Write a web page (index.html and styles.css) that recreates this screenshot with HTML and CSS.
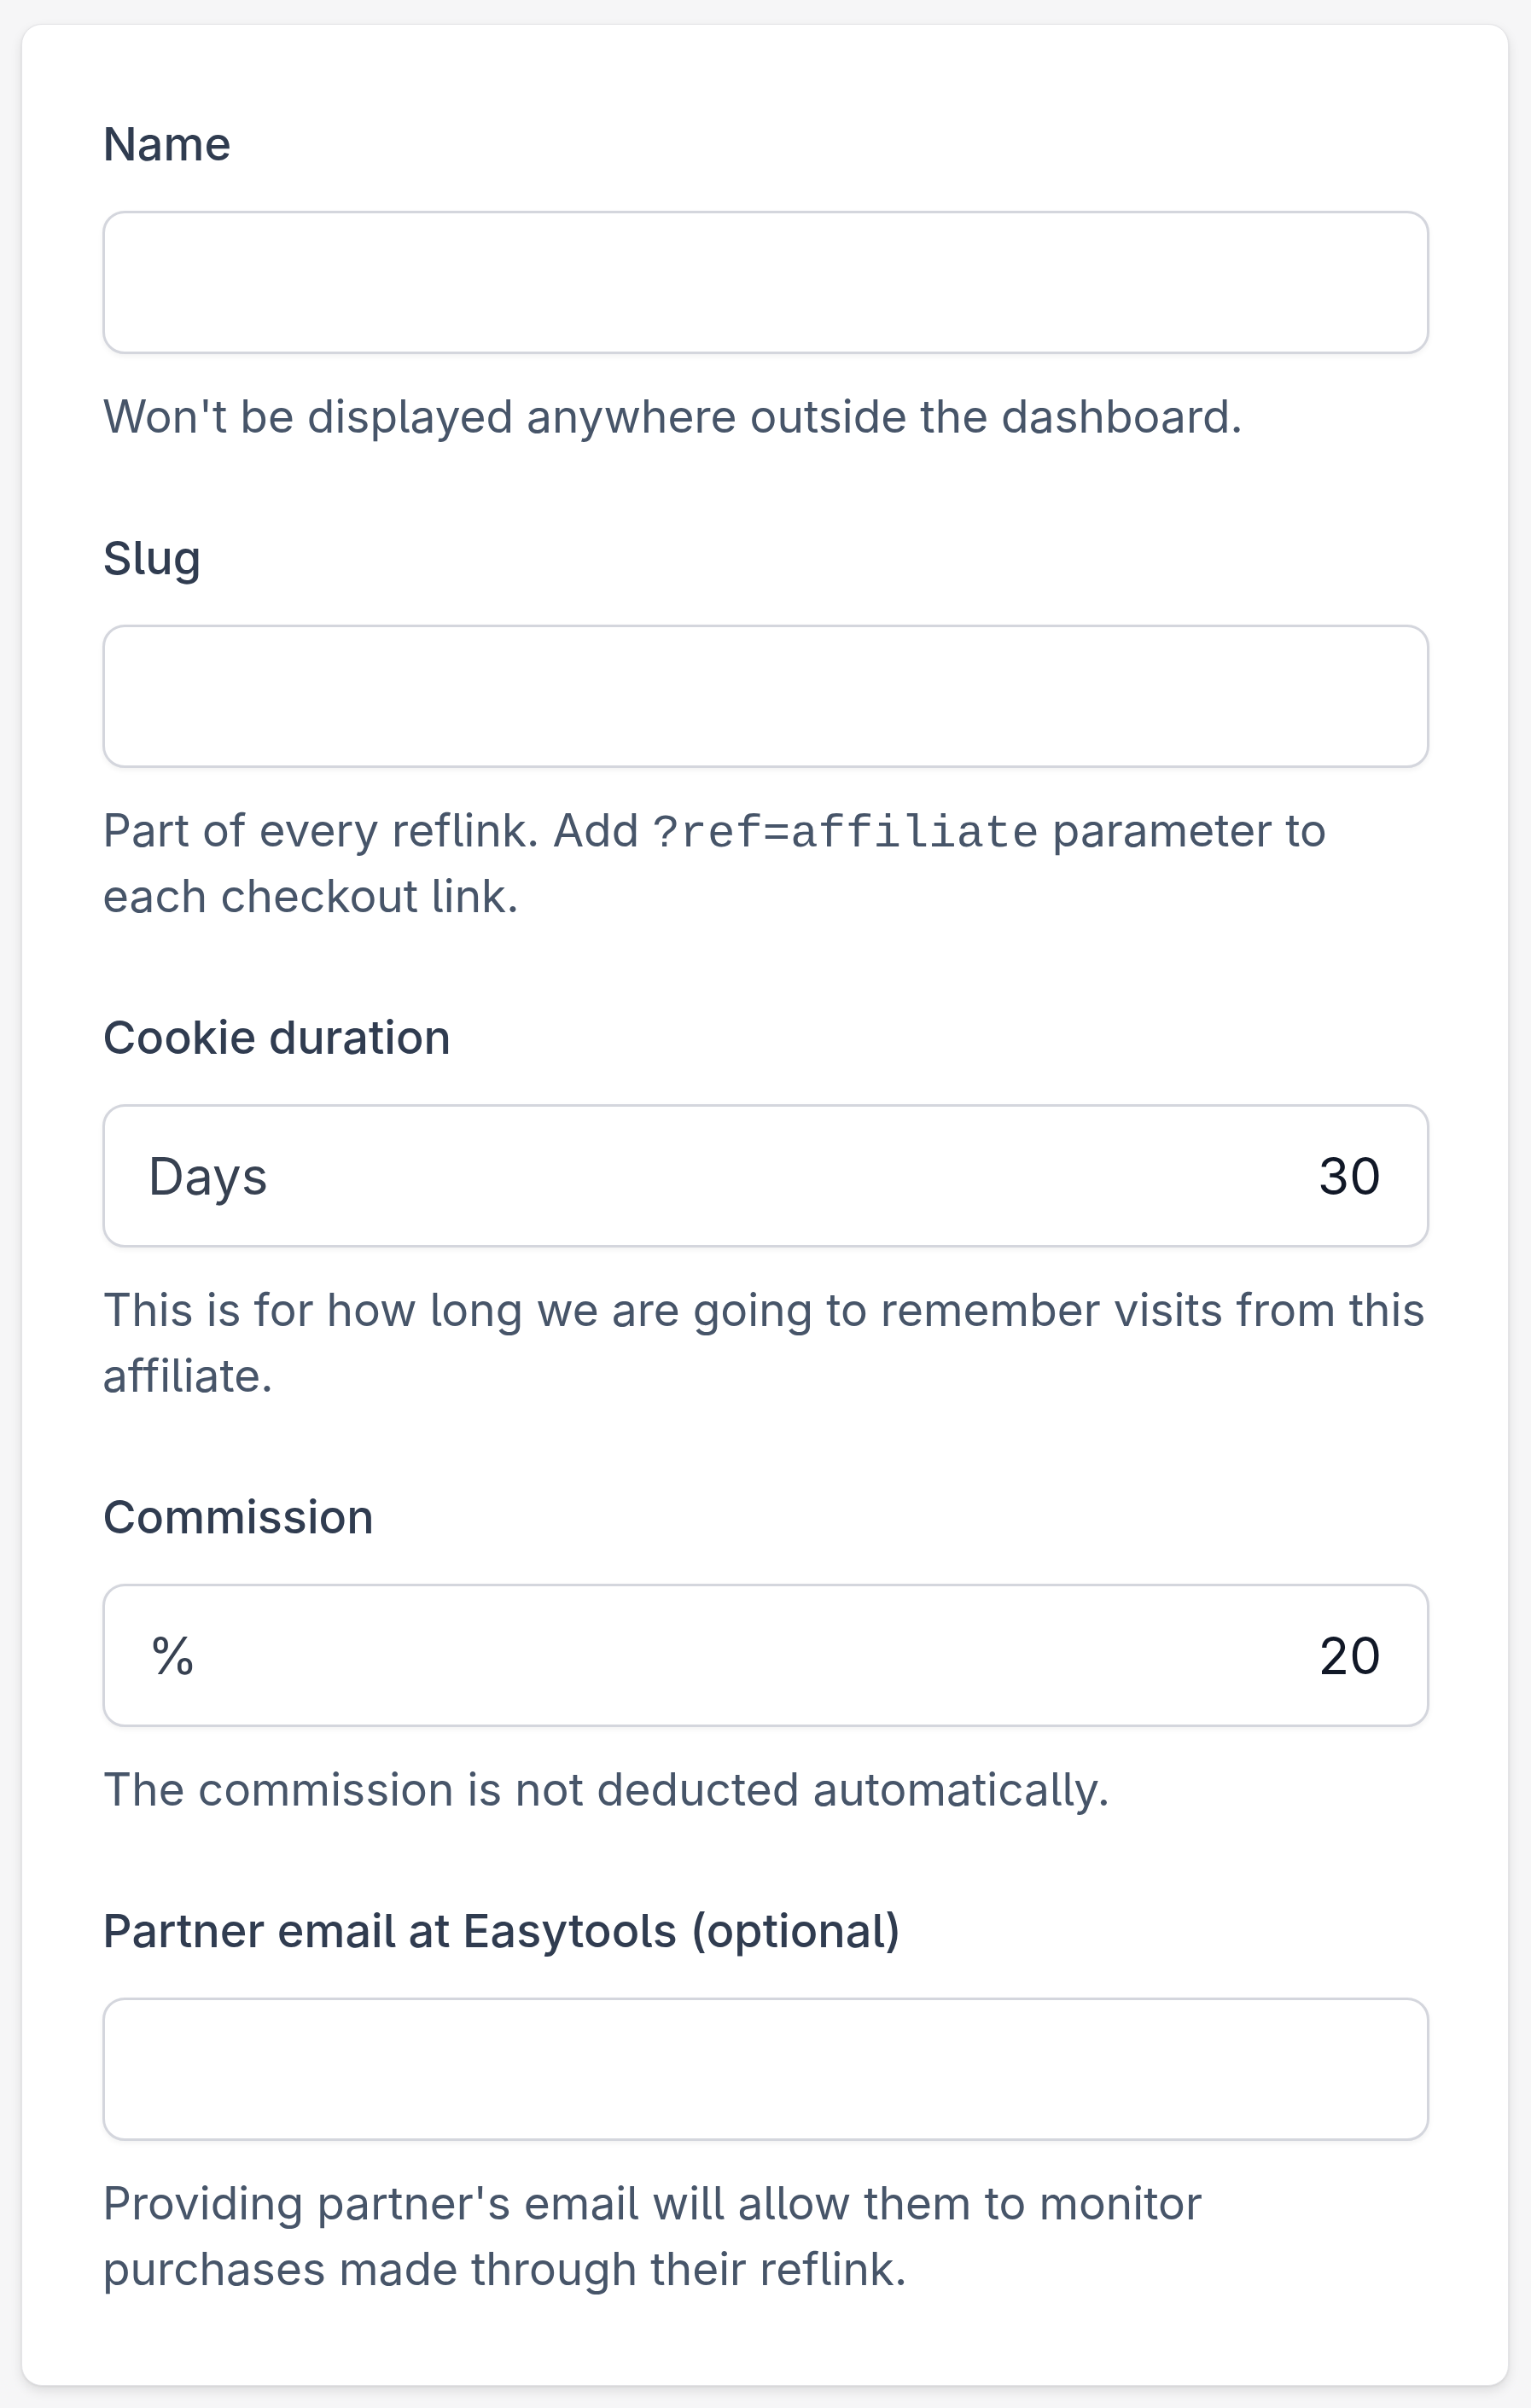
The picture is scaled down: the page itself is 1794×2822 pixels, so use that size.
FILE: index.html
```html
<!DOCTYPE html>
<html lang="en">
<head>
<meta charset="utf-8">
<title>Affiliate</title>
<link rel="stylesheet" href="styles.css">
</head>
<body>
<div class="page">
  <form class="card">
    <div class="field">
      <label class="label" for="name">Name</label>
      <div class="control"><input class="input" id="name" type="text"></div>
      <p class="help">Won't be displayed anywhere outside the dashboard.</p>
    </div>
    <div class="field">
      <label class="label" for="slug">Slug</label>
      <div class="control"><input class="input" id="slug" type="text"></div>
      <p class="help">Part of every reflink. Add <code class="code">?ref=affiliate</code> parameter to each checkout link.</p>
    </div>
    <div class="field">
      <label class="label" for="cookie">Cookie duration</label>
      <div class="control addon">
        <span class="prefix">Days</span>
        <input class="input value" id="cookie" type="text" value="30">
      </div>
      <p class="help">This is for how long we are going to remember visits from this affiliate.</p>
    </div>
    <div class="field">
      <label class="label" for="commission">Commission</label>
      <div class="control addon">
        <span class="prefix">%</span>
        <input class="input value" id="commission" type="text" value="20">
      </div>
      <p class="help">The commission is not deducted automatically.</p>
    </div>
    <div class="field">
      <label class="label" for="email">Partner email at Easytools (optional)</label>
      <div class="control"><input class="input" id="email" type="email"></div>
      <p class="help">Providing partner's email will allow them to monitor purchases made through their reflink.</p>
    </div>
  </form>
</div>
</body>
</html>
```

FILE: styles.css
```css
* { box-sizing: border-box; }
html, body { margin: 0; padding: 0; }
body {
  background: #f6f6f7;
  font-family: Inter, "Noto Sans", sans-serif;
  font-feature-settings: "cv05" 1;
}
.page {
  padding: 28px 26px 26px 25px;
}
.card {
  background: #ffffff;
  border: 1px solid #e4e4e7;
  border-radius: 24px;
  box-shadow: 0 6px 14px rgba(0, 0, 0, 0.10), 0 1px 3px rgba(0, 0, 0, 0.08);
  padding: 101px 92px 98px 94px;
  display: flex;
  flex-direction: column;
  gap: 89px;
}
.field {
  display: flex;
  flex-direction: column;
}
.label {
  display: block;
  font-size: 54px;
  line-height: 77px;
  font-weight: 500;
  color: #303c50;
  margin-bottom: 40px;
}
.control {
  height: 168px;
  border: 3px solid #d4d6dd;
  border-radius: 26px;
  background: #ffffff;
  box-shadow: 0 3px 6px rgba(0, 0, 0, 0.05);
  display: flex;
  align-items: center;
}
.input {
  width: 100%;
  height: 100%;
  border: 0;
  outline: 0;
  background: transparent;
  font-family: Inter, "Noto Sans", sans-serif;
  font-size: 60px;
  color: #111827;
  padding: 0 52px;
  border-radius: 26px;
}
.addon {
  padding-left: 50px;
}
.prefix {
  font-size: 60px;
  color: #374151;
  flex: none;
}
.value {
  text-align: right;
  padding-right: 53px;
}
.help {
  margin: 34px 0 0;
  font-size: 53.2px;
  line-height: 77px;
  color: #475569;
}
.code {
  font-family: "Liberation Mono", "DejaVu Sans Mono", monospace;
  font-size: 54px;
  line-height: 1;
  color: #475569;
}
```
